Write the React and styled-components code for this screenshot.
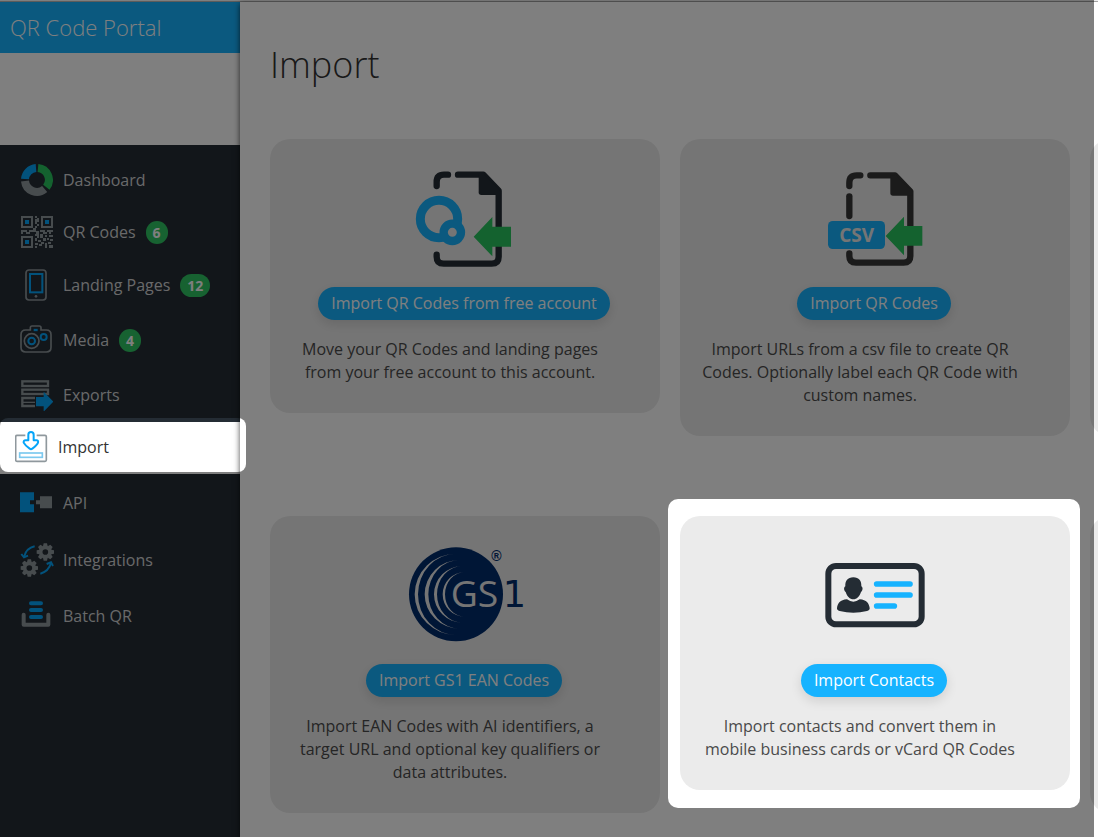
import React from "react";
import styled, { createGlobalStyle } from "styled-components";

const GREY = "#8f989d";
const BLUE = "#05a5f9";
const INK = "#242c34";
const GREEN = "#28c45e";

const DashboardIcon = () => (
  <svg width="32" height="32" viewBox="0 0 96 96" fill="none" strokeWidth="24" aria-hidden="true">
    <path d="M12 45A36 36 0 0 1 45 12" stroke={BLUE} />
    <path d="M51 12A36 36 0 0 1 76 70" stroke={GREEN} />
    <path d="M71 75A36 36 0 0 1 12 51" stroke={GREY} />
  </svg>
);

const QrIcon = () => (
  <svg width="32" height="32" viewBox="0 0 32 32" aria-hidden="true">
    <g fill="none" stroke={GREY} strokeWidth="2">
      <rect x="1" y="1" width="10" height="10" />
      <rect x="21" y="1" width="10" height="10" />
      <rect x="1" y="21" width="10" height="10" />
    </g>
    <path
      fill={GREY}
      d="M14 0h2v2h-2zM16 2h2v4h-2zM14 3h2v5h-2zM16 8h2v2h-2zM14 10h2v2h-2zM0 14h6v2H0zM5 16h4v2H5zM8 14h4v2H8zM12 12h3v4h-3zM15 15h3v3h-3zM19 14h5v2h-5zM22 16h4v2h-4zM26 14h6v2h-6zM28 16h2v2h-2zM0 16h2v2H0zM14 18h4v2h-4zM19 18h3v4h-3zM24 19h2v2h-2zM28 19h4v2h-4zM14 22h2v3h-2zM16 20h2v2h-2zM17 24h3v2h-3zM22 22h3v3h-3zM26 22h2v2h-2zM29 23h3v2h-3zM14 27h3v2h-3zM18 28h3v2h-3zM20 26h3v2h-3zM24 27h2v5h-2zM27 26h3v2h-3zM14 30h2v2h-2zM28 29h4v3h-4z"
    />
    <path fill={BLUE} d="M4 4h4v4H4zM24 4h4v4h-4zM4 24h4v4H4z" />
  </svg>
);

const PhoneIcon = () => (
  <svg width="32" height="32" viewBox="0 0 96 96" fill="none" aria-hidden="true">
    <rect x="15" y="3" width="60" height="90" rx="9" stroke={GREY} strokeWidth="5" />
    <rect x="27" y="15" width="37" height="55" stroke={BLUE} strokeWidth="6" />
    <circle cx="45" cy="82" r="4" fill={GREY} />
  </svg>
);

const CameraIcon = () => (
  <svg width="34" height="32" viewBox="0 0 102 96" fill="none" strokeWidth="5" aria-hidden="true">
    <path
      d="M17 18H31V11Q31 6 36 6H58Q63 6 63 11V18H79Q93 18 93 32V70Q93 84 79 84H17Q3 84 3 70V32Q3 18 17 18Z"
      stroke={GREY}
    />
    <circle cx="35" cy="51" r="22" stroke={GREY} />
    <circle cx="35" cy="51" r="10" stroke={BLUE} strokeWidth="6" />
    <circle cx="71" cy="39" r="9" stroke={BLUE} strokeWidth="6" />
    <path d="M41 18H53" stroke={BLUE} strokeWidth="7" />
  </svg>
);

const ExportIcon = () => (
  <svg width="32" height="32" viewBox="0 0 96 96" aria-hidden="true">
    <g fill="none" stroke={GREY} strokeWidth="7">
      <rect x="4" y="7" width="77" height="14" />
      <rect x="4" y="32" width="77" height="13" />
      <path d="M42 57H4V81H42" />
      <path d="M4 70H42" strokeWidth="4" />
    </g>
    <path d="M45 54H68V38L97 68L68 98V82H45Z" fill={BLUE} />
  </svg>
);

const ImportIcon = () => (
  <svg width="34" height="32" viewBox="0 0 102 96" fill="none" aria-hidden="true">
    <path
      d="M31 13H6Q2 13 2 17V87Q2 91 6 91H90Q94 91 94 87V17Q94 13 90 13H65"
      stroke={GREY}
      strokeWidth="5"
    />
    <rect x="14" y="66" width="68" height="13" stroke="#7cc9ef" strokeWidth="5" />
    <path
      d="M40 11Q40 3 48 3Q56 3 56 11V28H63Q71 27 69 35Q66 43 52 53Q48 56 44 53Q30 43 26 35Q25 27 33 28H40Z"
      stroke={BLUE}
      strokeWidth="6"
      strokeLinejoin="round"
    />
  </svg>
);

const ApiIcon = () => (
  <svg width="34" height="32" viewBox="0 0 102 96" aria-hidden="true">
    <path d="M0 16H42V40H30V52H42V76H0Z" fill={BLUE} />
    <path d="M60 28H96V64H60V52H48V40H60Z" fill={GREY} />
  </svg>
);

const Gear = ({ cx, cy }) => (
  <g transform={`translate(${cx} ${cy})`}>
    <circle r="14" fill="none" stroke={GREY} strokeWidth="11" />
    {[0, 45, 90, 135, 180, 225, 270, 315].map((angle) => (
      <path key={angle} d="M-7 -17L-5 -26H5L7 -17Z" fill={GREY} transform={`rotate(${angle})`} />
    ))}
  </g>
);

const IntegrationsIcon = () => (
  <svg width="34" height="34" viewBox="-2 0 102 102" fill="none" aria-hidden="true">
    <Gear cx={74} cy={27} />
    <Gear cx={26} cy={75} />
    <g stroke={BLUE} strokeWidth="6">
      <path d="M42 10Q17 15 10 42" />
      <path d="M2 33L10 43L22 38" />
      <path d="M59 92Q84 85 91 60" />
      <path d="M78 63L91 58L97 69" />
    </g>
  </svg>
);

const BatchIcon = () => (
  <svg width="32" height="32" viewBox="0 0 96 96" fill="none" strokeLinecap="round" aria-hidden="true">
    <path d="M8 44V74H82V44" stroke={GREY} strokeWidth="12" strokeLinejoin="round" />
    <path d="M30 10H60M30 30H60M30 51H60" stroke={BLUE} strokeWidth="12" />
  </svg>
);

const FreeAccountIcon = () => (
  <svg width="100" height="100" viewBox="45 24 300 300" fill="none" aria-hidden="true">
    <g stroke={INK} strokeWidth="19" strokeLinecap="round" strokeLinejoin="round">
      <path d="M110 78V66Q110 44 132 44H144" />
      <path d="M174 44H250L296 92V290Q296 311 275 311H131Q110 311 110 290V284" />
    </g>
    <path d="M236 44H252L300 92V105H244Q236 105 236 97Z" fill={INK} />
    <circle cx="117" cy="177" r="56" stroke="#16b3ff" strokeWidth="27" />
    <circle cx="157" cy="217" r="26" fill="#ebebeb" stroke="#16b3ff" strokeWidth="25" />
    <path d="M221 230L277 171V200H333V260H277V289Z" fill={GREEN} />
  </svg>
);

const CsvIcon = () => (
  <svg width="100" height="100" viewBox="30 24 300 300" fill="none" aria-hidden="true">
    <g stroke="#363636" strokeWidth="19" strokeLinecap="round" strokeLinejoin="round">
      <path d="M103 78V68Q103 46 125 46H136" />
      <path d="M103 109V168" />
      <path d="M166 46H240L286 94V288Q286 308 266 308H123Q103 308 103 288V280" />
    </g>
    <path d="M226 46H242L292 94V107H234Q226 107 226 99Z" fill="#363636" />
    <rect x="39" y="183" width="171" height="84" rx="14" fill="#16b3ff" />
    <LogoText x="125" y="245" fontSize="57" fontWeight="700" textAnchor="middle">
      CSV
    </LogoText>
    <path d="M212 228L267 170V198H322V257H267V286Z" fill={GREEN} />
  </svg>
);

const Gs1Icon = () => (
  <svg width="120" height="100" viewBox="30 30 360 300" fill="none" aria-hidden="true">
    <circle cx="183" cy="178" r="141" fill="#002c6c" />
    <g fill="#ebebeb">
      <path d="M184 56A125 122 0 0 0 184 300A115 122 0 0 1 184 56Z" />
      <path d="M194 75A105 103 0 0 0 194 281A94 103 0 0 1 194 75Z" />
      <path d="M202 93A85 85 0 0 0 202 263A76 85 0 0 1 202 93Z" />
      <path d="M210 111A67 67 0 0 0 210 245A60 67 0 0 1 210 111Z" />
    </g>
    <LogoText x="167" y="217" fontSize="112" fontWeight="500">GS</LogoText>
    <LogoText x="323" y="217" fontSize="110" $tone="#002c6c" $face="DejaVu Sans">1</LogoText>
    <LogoText x="289" y="77" fontSize="42" fontWeight="700" $tone="#002c6c" $face="Liberation Sans">®</LogoText>
  </svg>
);

const ContactIcon = () => (
  <svg width="100" height="100" viewBox="495 165 300 300" fill="none" aria-hidden="true">
    <rect x="505" y="228" width="280" height="175" rx="23" stroke={INK} strokeWidth="18" />
    <path
      d="M580 262C597 262 605 273 604 289C610 292 608 303 603 306C599 319 590 328 580 328C570 328 561 319 557 306C552 303 550 292 556 289C555 273 563 262 580 262Z"
      fill={INK}
    />
    <path
      d="M561 328Q580 342 599 328C620 330 627 340 629 354Q630 360 621 363Q580 373 539 363Q530 360 531 354C533 340 540 330 561 328Z"
      fill={INK}
    />
    <path d="M650 282H750M650 315H750M650 348H703" stroke="#16b3ff" strokeWidth="17" strokeLinecap="round" />
  </svg>
);

const navItems = [
  { label: "Dashboard", Icon: DashboardIcon, height: 52 },
  { label: "QR Codes", Icon: QrIcon, height: 52, count: 6 },
  { label: "Landing Pages", Icon: PhoneIcon, height: 54, count: 12 },
  { label: "Media", Icon: CameraIcon, height: 56, count: 4 },
  { label: "Exports", Icon: ExportIcon, height: 54 },
  { label: "Import", Icon: ImportIcon, height: 52, active: true },
  { label: "API", Icon: ApiIcon, height: 58 },
  { label: "Integrations", Icon: IntegrationsIcon, height: 56 },
  { label: "Batch QR", Icon: BatchIcon, height: 56 },
];

const cards = [
  {
    action: "Import QR Codes from free account",
    text: "Move your QR Codes and landing pages from your free account to this account.",
    Icon: FreeAccountIcon,
  },
  {
    action: "Import QR Codes",
    text: "Import URLs from a csv file to create QR Codes. Optionally label each QR Code with custom names.",
    Icon: CsvIcon,
  },
  { blank: true },
  {
    action: "Import GS1 EAN Codes",
    text: "Import EAN Codes with AI identifiers, a target URL and optional key qualifiers or data attributes.",
    Icon: Gs1Icon,
  },
  {
    action: "Import Contacts",
    text: "Import contacts and convert them in mobile business cards or vCard QR Codes",
    Icon: ContactIcon,
    highlighted: true,
  },
  { blank: true },
];

const App = () => {
  return (
    <Page>
      <GlobalStyle />
      <Sidebar>
        <Brand>QR Code Portal</Brand>
        <AccountArea />
        <Nav>
          {navItems.map(({ label, Icon, height, count, active }) => (
            <NavLink key={label} href="#" $height={height} $active={active}>
              <IconSlot>
                <Icon />
              </IconSlot>
              {label}
              {count && <Badge>{count}</Badge>}
            </NavLink>
          ))}
        </Nav>
      </Sidebar>

      <Main>
        <Title>Import</Title>
        <CardGrid>
          {cards.map(({ action, text, Icon, blank, highlighted }, i) =>
            blank ? (
              <Card key={i} $stretch />
            ) : (
              <Card key={i} $highlighted={highlighted}>
                <Icon />
                <ActionButton>{action}</ActionButton>
                <Description>{text}</Description>
              </Card>
            )
          )}
        </CardGrid>
      </Main>

      <Dimmer>
        <NavSpotlight />
      </Dimmer>
    </Page>
  );
};

export default App;

// Styled components
const GlobalStyle = createGlobalStyle`
  * {
    box-sizing: border-box;
  }

  body {
    margin: 0;
    background: #fff;
    color: #333;
    font: 16px/23px "Open Sans", "Noto Sans", sans-serif;
  }
`;

const Page = styled.div`
  position: relative;
  display: flex;
  min-height: 100vh;
  padding-top: 2px;
  overflow: hidden;
  background: linear-gradient(#fff 1px, #b8b8b8 1px, #b8b8b8 2px, #fff 2px);
`;

const Sidebar = styled.aside`
  display: flex;
  flex-direction: column;
  flex: 0 0 240px;
  background: ${INK};
`;

const Brand = styled.div`
  padding: 0 10px;
  background: #16b3ff;
  color: #fff;
  font-size: 22px;
  font-weight: 300;
  line-height: 51px;
`;

const AccountArea = styled.div`
  height: 92px;
  background: #fff;
`;

const Nav = styled.nav`
  display: flex;
  flex-direction: column;
  padding-top: 9px;
`;

const NavLink = styled.a`
  display: flex;
  align-items: center;
  height: ${(props) => props.$height}px;
  padding: ${(props) => (props.$active ? "0 0 2px 15px" : "0 0 0 20px")};
  background: ${(props) => (props.$active ? "#fff" : "transparent")};
  color: ${(props) => (props.$active ? "#333" : "#d2d3d4")};
  text-decoration: none;
`;

const IconSlot = styled.span`
  display: flex;
  justify-content: center;
  width: 34px;
  margin-right: 9px;
`;

const Badge = styled.span`
  min-width: 22px;
  margin-left: 10px;
  padding: 0 7px;
  border-radius: 12px;
  background: #2fc463;
  color: #fff;
  font-size: 14px;
  font-weight: 700;
  text-align: center;
`;

const Main = styled.main`
  flex: 1;
  min-width: 0;
  padding: 36px 0 24px 30px;
  background: #fff;
  box-shadow: 0 2px 6px rgba(0, 0, 0, 0.7);
`;

const Title = styled.h1`
  margin: 0 0 47px;
  font-size: 36px;
  font-weight: 300;
  line-height: 54px;
`;

const CardGrid = styled.div`
  display: grid;
  grid-template-columns: repeat(3, 390px);
  gap: 80px 20px;
  align-items: start;
`;

const Card = styled.section`
  position: relative;
  z-index: ${(props) => (props.$highlighted ? 3 : "auto")};
  display: flex;
  flex-direction: column;
  align-items: center;
  align-self: ${(props) => (props.$stretch ? "stretch" : "start")};
  padding: 29px 20px;
  border-radius: 20px;
  background: #ebebeb;

  /* white frame and card face of the highlighted card */
  &::before {
    content: ${(props) => (props.$highlighted ? '""' : "none")};
    position: absolute;
    inset: -17px -10px -18px -12px;
    z-index: -1;
    border-radius: 10px;
    background: #fff;
  }

  &::after {
    content: ${(props) => (props.$highlighted ? '""' : "none")};
    position: absolute;
    inset: 0;
    z-index: -1;
    border-radius: 20px;
    background: #ebebeb;
  }
`;

const ActionButton = styled.button`
  height: 33px;
  margin: 19px 2px 18px 0;
  padding: 0 13px;
  border: none;
  border-radius: 17px;
  background: #16b3ff;
  box-shadow: 0 4px 12px rgba(0, 0, 0, 0.12);
  color: #fff;
  font: inherit;
  cursor: pointer;
`;

const Description = styled.p`
  align-self: flex-start;
  width: calc(100% - 30px);
  margin: 0;
  color: #4a4a4a;
  text-align: center;
`;

const LogoText = styled.text`
  fill: ${(props) => props.$tone || "#ebebeb"};
  font-family: "${(props) => props.$face || "Open Sans"}", sans-serif;
`;

const Dimmer = styled.div`
  position: absolute;
  inset: 0 4px 0 0;
  z-index: 2;
  overflow: hidden;
  pointer-events: none;
`;

const NavSpotlight = styled.div`
  position: absolute;
  top: 418px;
  left: 0;
  width: 246px;
  height: 54px;
  border-radius: 8px;
  box-shadow: 0 0 0 2000px rgba(0, 0, 0, 0.5);
`;
